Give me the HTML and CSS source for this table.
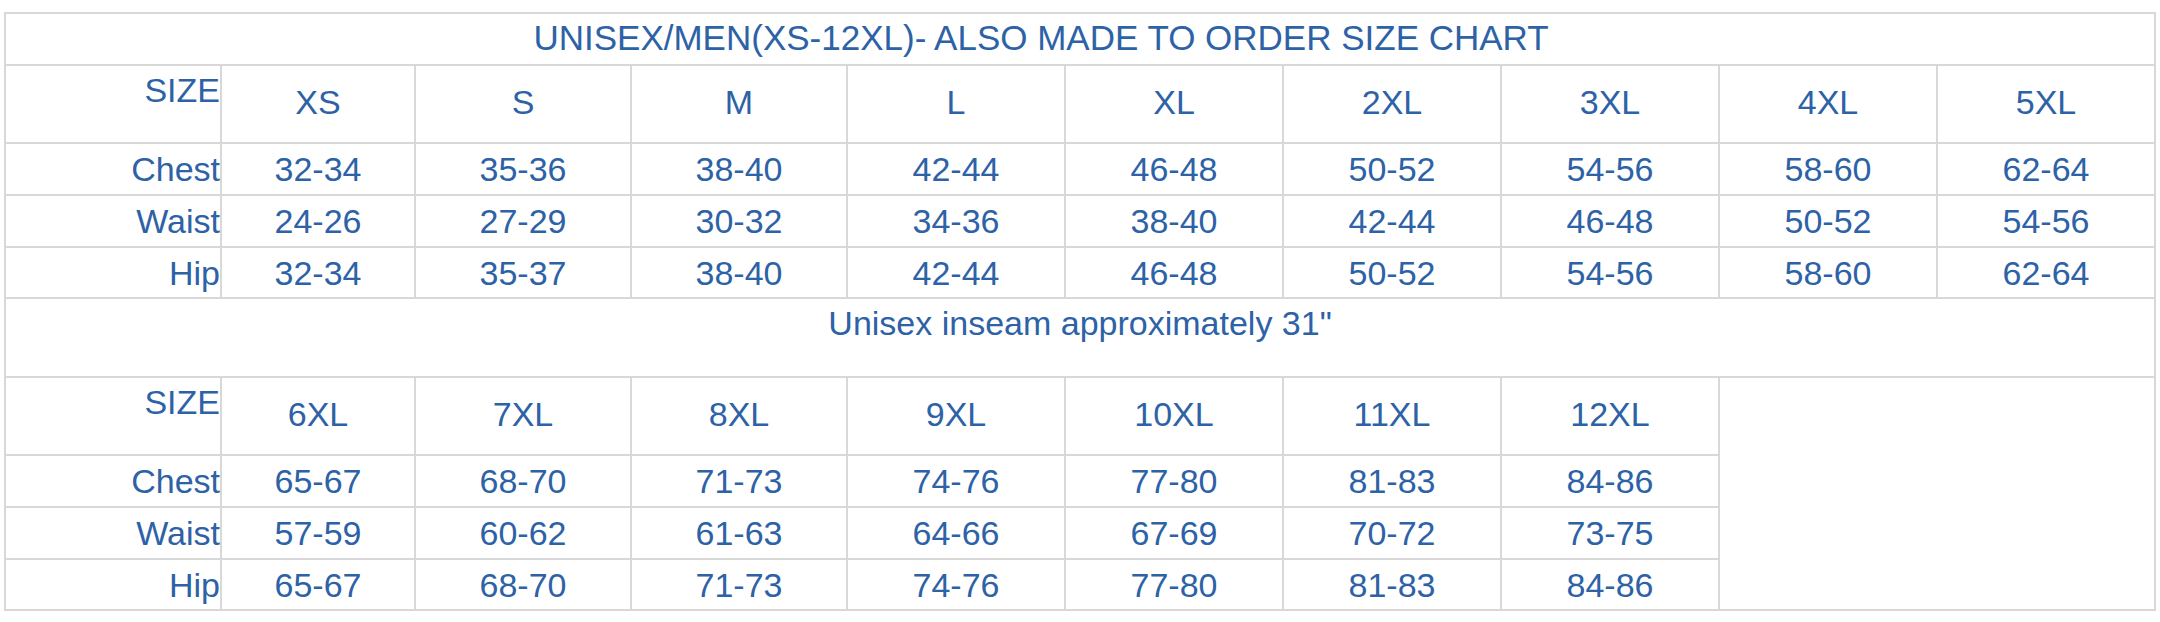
FILE: index.html
```html
<!DOCTYPE html>
<html lang="en">
<head>
<meta charset="utf-8">
<title>Unisex/Men Size Chart</title>
<link rel="stylesheet" href="styles.css">
</head>
<body>
<table class="chart">
  <colgroup>
    <col class="c-label">
    <col class="c-xs">
    <col class="c-mid">
    <col class="c-mid">
    <col class="c-std">
    <col class="c-std">
    <col class="c-std">
    <col class="c-std">
    <col class="c-std">
    <col class="c-std">
  </colgroup>
  <tbody>
    <tr class="row-title">
      <td class="title" colspan="10">UNISEX/MEN(XS-12XL)- ALSO MADE TO ORDER SIZE CHART</td>
    </tr>
    <tr class="row-head">
      <td class="label head-label">SIZE</td>
      <td class="head">XS</td><td class="head">S</td><td class="head">M</td><td class="head">L</td><td class="head">XL</td><td class="head">2XL</td><td class="head">3XL</td><td class="head">4XL</td><td class="head">5XL</td>
    </tr>
    <tr class="row-data">
      <td class="label">Chest</td>
      <td>32-34</td><td>35-36</td><td>38-40</td><td>42-44</td><td>46-48</td><td>50-52</td><td>54-56</td><td>58-60</td><td>62-64</td>
    </tr>
    <tr class="row-data">
      <td class="label">Waist</td>
      <td>24-26</td><td>27-29</td><td>30-32</td><td>34-36</td><td>38-40</td><td>42-44</td><td>46-48</td><td>50-52</td><td>54-56</td>
    </tr>
    <tr class="row-last">
      <td class="label">Hip</td>
      <td>32-34</td><td>35-37</td><td>38-40</td><td>42-44</td><td>46-48</td><td>50-52</td><td>54-56</td><td>58-60</td><td>62-64</td>
    </tr>
    <tr class="row-note">
      <td class="note" colspan="10">Unisex inseam approximately 31"</td>
    </tr>
    <tr class="row-head">
      <td class="label head-label">SIZE</td>
      <td class="head">6XL</td><td class="head">7XL</td><td class="head">8XL</td><td class="head">9XL</td><td class="head">10XL</td><td class="head">11XL</td><td class="head">12XL</td>
      <td class="blank" colspan="2" rowspan="4"></td>
    </tr>
    <tr class="row-data">
      <td class="label">Chest</td>
      <td>65-67</td><td>68-70</td><td>71-73</td><td>74-76</td><td>77-80</td><td>81-83</td><td>84-86</td>
    </tr>
    <tr class="row-data">
      <td class="label">Waist</td>
      <td>57-59</td><td>60-62</td><td>61-63</td><td>64-66</td><td>67-69</td><td>70-72</td><td>73-75</td>
    </tr>
    <tr class="row-last">
      <td class="label">Hip</td>
      <td>65-67</td><td>68-70</td><td>71-73</td><td>74-76</td><td>77-80</td><td>81-83</td><td>84-86</td>
    </tr>
  </tbody>
</table>
</body>
</html>
```
FILE: styles.css
```css
html, body {
  margin: 0;
  padding: 0;
  background: #ffffff;
}

body {
  padding: 12px 0 0 4px;
  font-family: "Liberation Sans", Arial, sans-serif;
  color: #2d62a6;
}

.chart {
  border-collapse: collapse;
  table-layout: fixed;
  width: 2152px;
  font-size: 34px;
  line-height: 40px;
}

.c-label { width: 216px; }
.c-xs { width: 194px; }
.c-mid { width: 216px; }
.c-std { width: 218px; }

.chart td {
  border: 2px solid #d8d8d8;
  padding: 0;
  text-align: center;
  vertical-align: middle;
  white-space: nowrap;
}

.row-title { height: 52px; }
.row-head { height: 78px; }
.row-data { height: 52px; }
.row-last { height: 51px; }
.row-note { height: 79px; }

.chart td.title {
  font-size: 35px;
  vertical-align: top;
  padding: 4px 78px 0 0;
}

.chart td.label {
  text-align: right;
}

.chart td.head-label {
  vertical-align: top;
  padding-top: 4px;
}

.chart td.head {
  padding-bottom: 4px;
}

.chart td.note {
  vertical-align: top;
  padding-top: 4px;
}
```
